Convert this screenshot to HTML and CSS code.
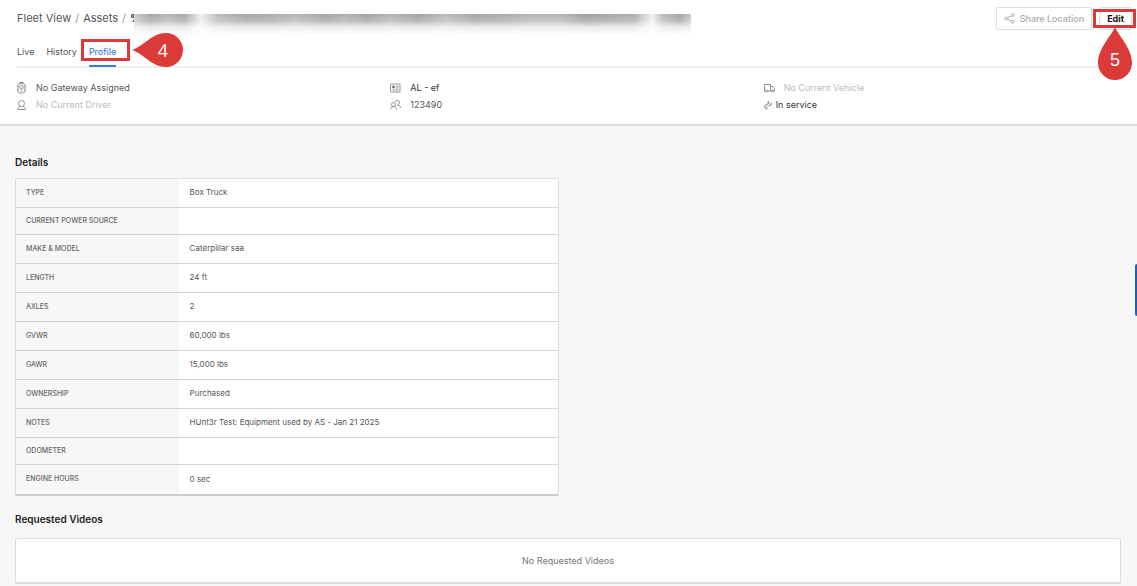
FILE: index.html
```html
<!DOCTYPE html>
<html lang="en">
  <head>
    <meta charset="UTF-8">
    <meta name="viewport" content="width=device-width, initial-scale=1">
    <title>Fleet View - Asset Profile</title>
    <link rel="stylesheet" href="styles.css">
  </head>
  <body>
    <header class="header">
      <div class="top-bar">
        <nav class="breadcrumb">
          <a href="#">Fleet View</a>
          <span class="slash">/</span>
          <a href="#">Assets</a>
          <span class="slash">/</span>
          <span class="asset-name">%<span class="redacted"></span></span>
        </nav>
        <div class="actions">
          <button type="button" class="button share" disabled>
            <svg width="11" height="11" viewBox="0 0 20 20" fill="none" stroke="currentColor" stroke-width="1.8">
              <circle cx="4" cy="10" r="2.500"/>
              <circle cx="16" cy="4" r="2.500"/>
              <circle cx="16" cy="16" r="2.500"/>
              <path d="M6.300 8.800L13.700 5.200M6.300 11.200L13.700 14.800"/>
            </svg>
            Share Location
          </button>
          <div class="edit-wrap">
            <button type="button" class="button edit">Edit</button>
            <span class="frame edit-frame"></span>
            <span class="pin pin-up">
              <svg width="36" height="54" viewBox="0 0 36 54">
                <path fill="#dc3939" d="M18 0C21 8 35 21 35 36A17 17 0 0 1 1 36C1 21 15 8 18 0Z"/>
              </svg>
              <span class="pin-number">5</span>
            </span>
          </div>
        </div>
      </div>

      <!-- Tabs -->
      <nav class="tabs">
        <a class="tab" href="#">Live</a>
        <a class="tab" href="#">History</a>
        <a class="tab active" href="#">Profile
          <span class="frame tab-frame"></span>
          <span class="pin pin-left">
            <svg width="54" height="36" viewBox="0 0 54 36">
              <path fill="#dc3939" d="M1 18C13 14 21 1 35 1A17 17 0 0 1 35 35C21 35 13 22 1 18Z"/>
            </svg>
            <span class="pin-number">4</span>
          </span>
        </a>
      </nav>

      <div class="summary">
        <div class="summary-column">
          <div class="summary-item">
            <svg width="10" height="12" viewBox="0 0 20 24" fill="none" stroke="#777" stroke-width="1.6">
              <rect x="2" y="3" width="14" height="19" rx="4"/>
              <path d="M6 3V1H12V3M2 9H0M2 16H0M16 9H18M16 16H18M7 18H11"/>
              <rect x="6" y="7" width="6" height="7" rx="2"/>
            </svg>
            <span>No Gateway Assigned</span>
          </div>
          <div class="summary-item muted">
            <svg width="10" height="12" viewBox="0 0 20 24" fill="none" stroke="#777" stroke-width="1.6">
              <circle cx="9" cy="9" r="6"/>
              <path d="M6 14.500C3 16 1 18 1 21H17C17 18 15 16 12 14.500"/>
            </svg>
            <span>No Current Driver</span>
          </div>
        </div>
        <div class="summary-column">
          <div class="summary-item dark">
            <svg width="11" height="12" viewBox="0 0 22 24" fill="none" stroke="#777" stroke-width="1.6">
              <rect x="1" y="4" width="19" height="16" rx="1.500"/>
              <path d="M5 8H9V12H5ZM12 8.500H17M12 12H17M5 16H17"/>
              <path d="M6 9H8V11H6Z" fill="#777"/>
            </svg>
            <span>AL - ef</span>
          </div>
          <div class="summary-item">
            <svg width="11" height="12" viewBox="0 0 22 24" fill="none" stroke="#777" stroke-width="1.6">
              <circle cx="7" cy="11" r="4"/>
              <path d="M1 21C1 17.500 3 15 7 15S13 17.500 13 21"/>
              <path d="M11 6C11.500 1.500 19 1.500 19 7C19 9 17.500 11 15.500 11M14 13C18 11.500 21 14 21 18"/>
            </svg>
            <span>123490</span>
          </div>
        </div>
        <div class="summary-column">
          <div class="summary-item muted">
            <svg width="11" height="12" viewBox="0 0 22 24" fill="none" stroke="#777" stroke-width="1.6">
              <path d="M3 18H1V5H13V18H7M13 9H18L21 13V18H19M15 18H13"/>
              <circle cx="5" cy="18" r="2"/>
              <circle cx="17" cy="18" r="2"/>
            </svg>
            <span>No Current Vehicle</span>
          </div>
          <div class="summary-item dark service">
            <svg width="8" height="10" viewBox="0 0 16 20" fill="none" stroke="#777" stroke-width="1.5">
              <path d="M10 3L9 7L12 9L15 6C16 10 13 12 10 11L6 15C7 17 5 19 3 18L5 15L3 13L1 15C0 11 3 9 6 10L8 8C7 5 8 3 10 3Z"/>
            </svg>
            <span>In service</span>
          </div>
        </div>
      </div>
    </header>

    <main class="content">
      <section class="details">
        <h2>Details</h2>
        <table class="details-table">
          <tbody>
            <tr><th scope="row">TYPE</th><td>Box Truck</td></tr>
            <tr class="empty"><th scope="row">CURRENT POWER SOURCE</th><td></td></tr>
            <tr><th scope="row">MAKE &amp; MODEL</th><td>Caterpillar saa</td></tr>
            <tr><th scope="row">LENGTH</th><td>24 ft</td></tr>
            <tr><th scope="row">AXLES</th><td>2</td></tr>
            <tr><th scope="row">GVWR</th><td>60,000 lbs</td></tr>
            <tr><th scope="row">GAWR</th><td>15,000 lbs</td></tr>
            <tr><th scope="row">OWNERSHIP</th><td>Purchased</td></tr>
            <tr><th scope="row">NOTES</th><td>HUnt3r Test: Equipment used by AS - Jan 21 2025</td></tr>
            <tr class="empty"><th scope="row">ODOMETER</th><td></td></tr>
            <tr><th scope="row">ENGINE HOURS</th><td>0 sec</td></tr>
          </tbody>
        </table>
      </section>

      <section class="videos">
        <h2>Requested Videos</h2>
        <p class="videos-empty">No Requested Videos</p>
      </section>
    </main>

    <button type="button" class="side-handle" aria-label="Help"></button>
  </body>
</html>
```

FILE: styles.css
```css
* {
  box-sizing: border-box;
}

body {
  margin: 0;
  background-color: #f7f7f7;
  color: #555;
  font-family: Inter, "Liberation Sans", sans-serif;
  font-size: 9px;
}

a {
  color: inherit;
  text-decoration: none;
}

/* Header */
.header {
  background-color: #fff;
  border-bottom: 2px solid #dedede;
  padding: 7px 0 11px 17px;
}

.top-bar {
  display: flex;
  justify-content: space-between;
  align-items: center;
  padding-right: 5px;
}

.breadcrumb {
  display: flex;
  gap: 4px;
  color: #555;
  font-size: 11px;
  line-height: 23px;
}

.slash {
  color: #999;
}

.asset-name {
  position: relative;
  color: #222;
  font-weight: 600;
}

/* smeared strip that hides the asset name */
.redacted {
  position: absolute;
  top: 7px;
  left: 4px;
  width: 49vw;
  height: 26px;
  background: linear-gradient(90deg, #ccc 0, #a5a5a5 3%, #b8b8b8 6%, #a8a8a8 9%, #eee 12%, #bbb 15%, #a5a5a5 20%, #adadad 25%, #b8b8b8 29%, #a5a5a5 34%, #b0b0b0 38%, #a3a3a3 42%, #b5b5b5 46%, #a3a3a3 51%, #bbb 56%, #a5a5a5 61%, #aaa 66%, #b8b8b8 72%, #b5b5b5 77%, #a0a0a0 81%, #aaa 87%, #b0b0b0 90%, #f0f0f0 93%, #bbb 95%, #a3a3a3 98%, #c4c8d0 100%);
}

.redacted::after {
  content: "";
  display: block;
  height: 100%;
  background: linear-gradient(rgba(255, 255, 255, 0), rgba(255, 255, 255, 0.2) 25%, rgba(255, 255, 255, 0.8) 52%, #fff 85%);
}

.actions {
  display: flex;
  gap: 7px;
}

.button {
  display: flex;
  align-items: center;
  gap: 5px;
  height: 23px;
  padding: 0 7px;
  background-color: #fff;
  border: 1px solid #ddd;
  border-radius: 2px;
  font-family: inherit;
  font-size: 9px;
  font-weight: 500;
}

.share {
  color: #aaa;
}

.edit {
  color: #111;
  font-weight: 700;
}

.edit-wrap {
  position: relative;
}

/* Tabs */
.tabs {
  display: flex;
  gap: 12px;
  margin-right: 16px;
  padding-top: 8px;
  border-bottom: 2px solid #f0f0f0;
}

.tab {
  position: relative;
  margin-bottom: -1px;
  height: 29px;
  border-bottom: 2px solid transparent;
  line-height: 28px;
}

.active {
  color: #2b72cf;
  border-bottom-color: #2f80e0;
}

/* Callouts */
.frame {
  position: absolute;
  border: 3px solid #dc3939;
  pointer-events: none;
}

.tab-frame {
  top: 1px;
  left: -8px;
  width: 49px;
  height: 22px;
}

.edit-frame {
  top: 2px;
  right: -4px;
  width: 43px;
  height: 19px;
}

.pin {
  position: absolute;
  display: grid;
  color: #fff;
  pointer-events: none;
}

.pin svg,
.pin-number {
  grid-area: 1 / 1;
}

.pin-number {
  font-family: "Open Sans", sans-serif;
  font-size: 18px;
  line-height: 36px;
  text-align: center;
}

.pin-left {
  top: -6px;
  left: 42px;
}

.pin-left .pin-number {
  padding-left: 10px;
}

.pin-up {
  top: 20px;
  right: -1px;
  z-index: 1;
}

.pin-up .pin-number {
  padding-top: 15px;
  font-family: "Liberation Sans", sans-serif;
}

/* Asset summary */
.summary {
  display: grid;
  grid-template-columns: repeat(3, 1fr);
  padding-top: 11px;
}

.summary-item {
  display: flex;
  align-items: center;
  gap: 9px;
  height: 17px;
  color: #555;
}

.summary-item.muted {
  color: #bbb;
}

.summary-item.dark {
  color: #333;
}

.summary-item.service {
  gap: 4px;
}

/* Content */
.content {
  padding: 28px 16px 3px 15px;
}

h2 {
  margin: 0;
  color: #222;
  font-size: 10px;
  font-weight: 600;
  line-height: 16px;
}

.details {
  width: calc(50% - 9px);
}

.details-table {
  width: 100%;
  margin-top: 8px;
  table-layout: fixed;
  border-spacing: 0;
  background-color: #fff;
  border: 1px solid #ddd;
  border-bottom: 2px solid #ccc;
  border-radius: 2px;
}

.details-table th,
.details-table td {
  height: 29px;
  padding: 0 10px 2px;
  border-bottom: 1px solid #d5d5d5;
  font-size: 8px;
  text-align: left;
}

.details-table td {
  padding-left: 11px;
}

.details-table th {
  width: 30%;
  background-color: #f7f7f7;
  color: #666;
  font-size: 7px;
  font-weight: 500;
}

.details-table .empty th,
.details-table .empty td {
  height: 27px;
}

.details-table tr:last-child th,
.details-table tr:last-child td {
  border-bottom: none;
}

.videos {
  margin-top: 15px;
}

.videos-empty {
  margin: 11px 0 0;
  background-color: #fff;
  border: 1px solid #ddd;
  border-bottom-width: 2px;
  border-radius: 2px;
  color: #777;
  line-height: 43px;
  text-align: center;
}

.side-handle {
  position: fixed;
  top: 45%;
  right: 0;
  width: 2px;
  height: 52px;
  padding: 0;
  border: none;
  border-radius: 2px 0 0 2px;
  background-color: #1b5fc0;
}
```
